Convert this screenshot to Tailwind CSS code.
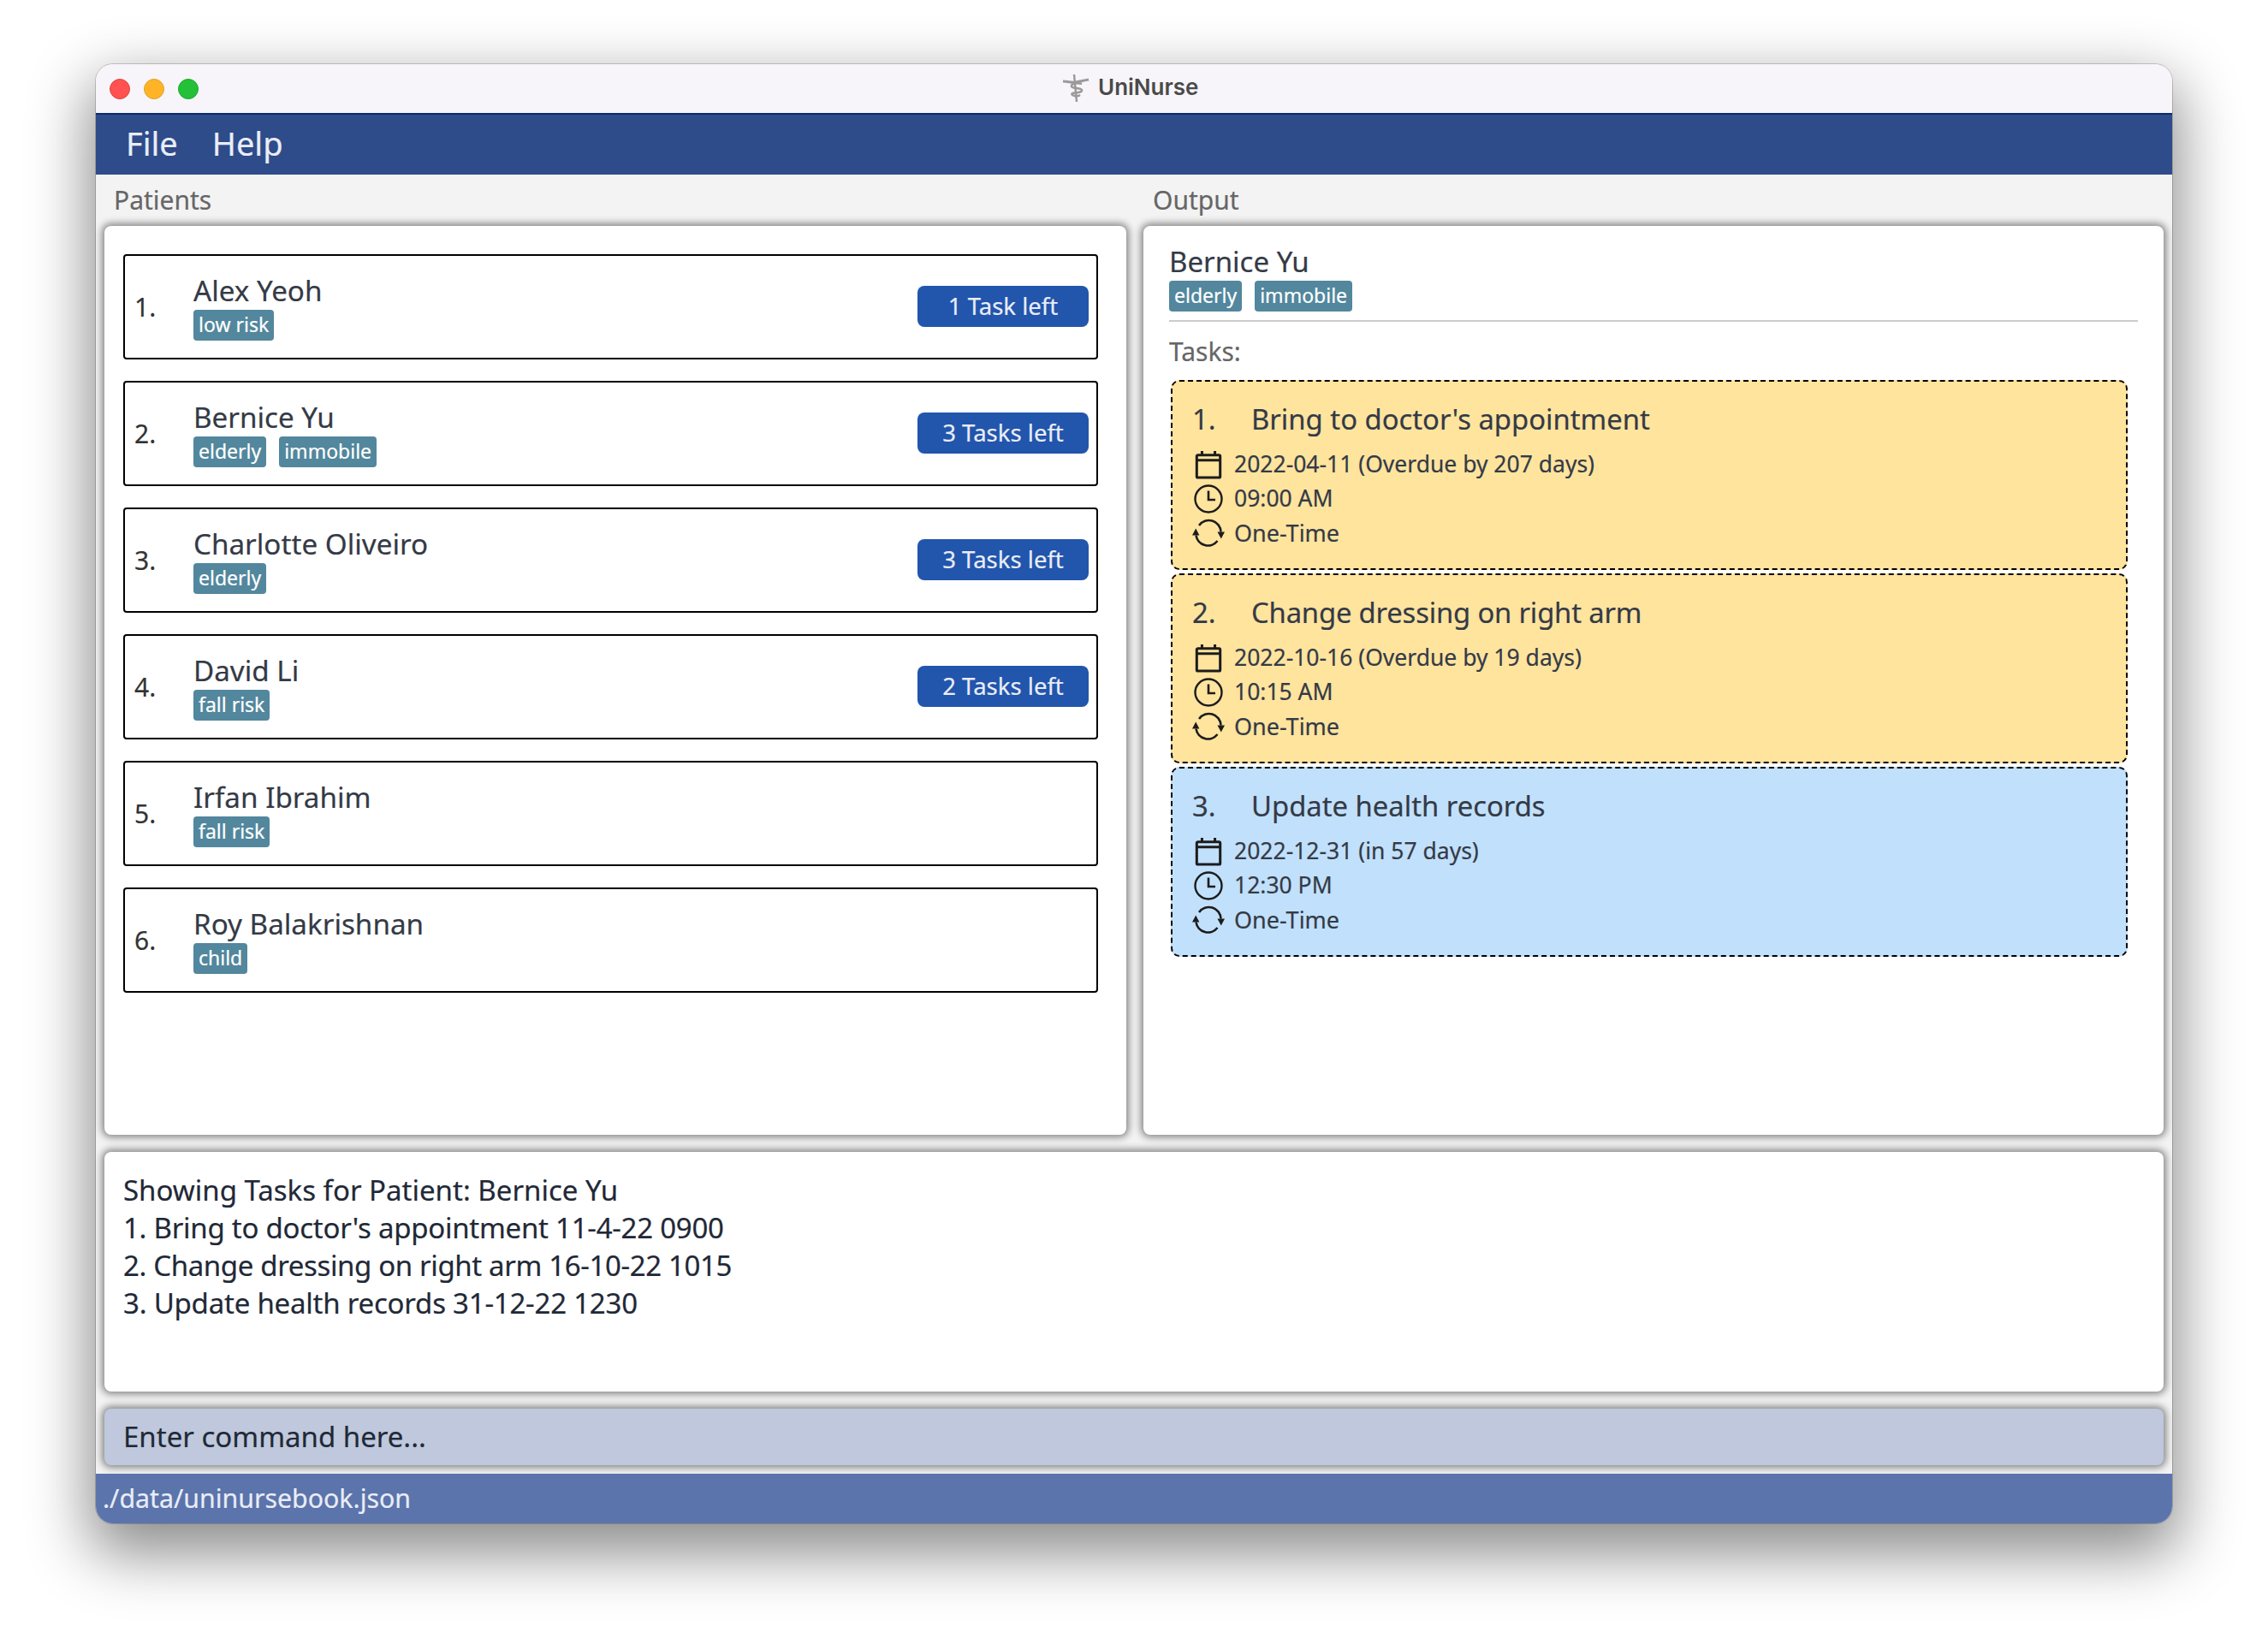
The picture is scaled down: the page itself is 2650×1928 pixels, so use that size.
<!DOCTYPE html>
<html lang="en">
<head>
    <meta charset="UTF-8">
    <meta name="viewport" content="width=device-width, initial-scale=1.0">
    <title>UniNurse</title>
    <script src="https://cdn.jsdelivr.net/npm/@tailwindcss/browser@4"></script>
</head>
<body class="bg-white h-[1928px] pt-[75px] pl-[112px] font-['Noto_Sans',sans-serif] [-webkit-text-stroke:0.2px] overflow-hidden">
    <!-- icons used by the task cards -->
    <svg class="hidden">
        <symbol id="i-cal" viewBox="0 0 32 36">
            <path d="M3 6h26a1.500 1.500 0 0 1 1.500 1.500v25a1.500 1.500 0 0 1-1.500 1.500h-26a1.500 1.500 0 0 1-1.500-1.500v-25a1.500 1.500 0 0 1 1.500-1.500z M1.500 12.500h29 M8 1v5 M24 1v5" fill="none" stroke="#1c1c1c" stroke-width="3.200"/>
        </symbol>
        <symbol id="i-clock" viewBox="0 0 34 34">
            <circle cx="17" cy="17" r="15.500" fill="none" stroke="#1c1c1c" stroke-width="2.400"/>
            <path d="M17 7.500v10.500h8" fill="none" stroke="#1c1c1c" stroke-width="2.600"/>
        </symbol>
        <symbol id="i-sync" viewBox="0 -1.500 38 34">
            <path d="M8 6.500A14 14 0 0 1 33.500 14" fill="none" stroke="#1c1c1c" stroke-width="2.600"/>
            <path d="M4.500 18A14 14 0 0 0 29.500 24.500" fill="none" stroke="#1c1c1c" stroke-width="2.600"/>
            <path d="M0 18l4.200-8 4.200 8z M29.500 14h8.500l-4.200 8z" fill="#1c1c1c"/>
        </symbol>
    </svg>

    <div class="w-[2426px] h-[1705px] flex flex-col rounded-[20px] overflow-hidden bg-[#f3f3f3] shadow-[0_0_0_1px_rgba(0,0,0,0.18),0_28px_70px_8px_rgba(0,0,0,0.45)]">
        <!-- title bar -->
        <div class="h-[57px] shrink-0 bg-[#f7f5f9] relative flex items-center pl-[16px] gap-[16px]">
            <span class="w-[24px] h-[24px] rounded-full bg-[#ff5251] border border-[#e0443e]"></span>
            <span class="w-[24px] h-[24px] rounded-full bg-[#ffb428] border border-[#dea123]"></span>
            <span class="w-[24px] h-[24px] rounded-full bg-[#24c138] border border-[#1aab29]"></span>
            <div class="absolute left-[1129px] top-[10px] flex items-center gap-[10px]">
                <svg width="32" height="34" viewBox="0 0 32 34" fill="none" stroke="#9a9a9a">
                    <path d="M14 1l3 32" stroke-width="2.500"/>
                    <path d="M1 9c7 0 9 2 15 1 6-1 9-2 15-3" stroke-width="3"/>
                    <path d="M23 12c-6-2-13 0-12 3 1 3 13 1 12 5-1 3-9 2-11 3-3 2 5 5 9 2" stroke-width="2.500"/>
                </svg>
                <span class="font-['Inter',sans-serif] font-semibold text-[26px] mt-[-3px] text-[#4a4a4a] [-webkit-text-stroke:0]">UniNurse</span>
            </div>
        </div>

        <!-- menu bar -->
        <div class="h-[72px] shrink-0 bg-[#2e4b8a] border-t-2 border-[#0c2a6e] flex items-center pl-[35px] pb-[3px] gap-[40px] text-[38px] text-[#e9edf6]">
            <span>File</span>
            <span>Help</span>
        </div>

        <!-- main -->
        <div class="flex-1 flex flex-col pl-[10px] pr-[10px] min-h-0">
            <div class="grid grid-cols-[1194px_1192px] gap-[20px] h-[1122px] shrink-0">
                <div class="flex flex-col min-h-0">
                    <div class="h-[60px] shrink-0 pl-[11px] pt-[10px] text-[30px] leading-[40px] text-[#666]">Patients</div>
                    <div class="flex-1 bg-white rounded-[8px] shadow-[0_0_9px_3px_rgba(0,0,0,0.45)] pt-[33px] pl-[22px] pr-[33px] flex flex-col gap-[25px]">
                        <div class="h-[123px] border-2 border-black rounded-[4px] flex items-center pl-[11px] pr-[9px]">
                            <span class="w-[69px] text-[30px] text-[#333]">1.</span>
                            <div class="flex-1">
                                <div class="text-[33.200px] leading-[40px] text-[#343a46]">Alex Yeoh</div>
                                <div class="flex gap-[15px] mt-[2px]">
                                    <span class="h-[36px] px-[6px] rounded-[4px] bg-[#52879d] text-white text-[23px] leading-[34px]">low risk</span>
                                </div>
                            </div>
                            <span class="w-[200px] h-[48px] mt-[-2px] rounded-[8px] bg-[#2255ac] text-[#e9edf6] text-[27.5px] leading-[48px] text-center">1 Task left</span>
                        </div>
                        <div class="h-[123px] border-2 border-black rounded-[4px] flex items-center pl-[11px] pr-[9px]">
                            <span class="w-[69px] text-[30px] text-[#333]">2.</span>
                            <div class="flex-1">
                                <div class="text-[33.200px] leading-[40px] text-[#343a46]">Bernice Yu</div>
                                <div class="flex gap-[15px] mt-[2px]">
                                    <span class="h-[36px] px-[6px] rounded-[4px] bg-[#52879d] text-white text-[23px] leading-[34px]">elderly</span>
                                    <span class="h-[36px] px-[6px] rounded-[4px] bg-[#52879d] text-white text-[23px] leading-[34px]">immobile</span>
                                </div>
                            </div>
                            <span class="w-[200px] h-[48px] mt-[-2px] rounded-[8px] bg-[#2255ac] text-[#e9edf6] text-[27.5px] leading-[48px] text-center">3 Tasks left</span>
                        </div>
                        <div class="h-[123px] border-2 border-black rounded-[4px] flex items-center pl-[11px] pr-[9px]">
                            <span class="w-[69px] text-[30px] text-[#333]">3.</span>
                            <div class="flex-1">
                                <div class="text-[33.200px] leading-[40px] text-[#343a46]">Charlotte Oliveiro</div>
                                <div class="flex gap-[15px] mt-[2px]">
                                    <span class="h-[36px] px-[6px] rounded-[4px] bg-[#52879d] text-white text-[23px] leading-[34px]">elderly</span>
                                </div>
                            </div>
                            <span class="w-[200px] h-[48px] mt-[-2px] rounded-[8px] bg-[#2255ac] text-[#e9edf6] text-[27.5px] leading-[48px] text-center">3 Tasks left</span>
                        </div>
                        <div class="h-[123px] border-2 border-black rounded-[4px] flex items-center pl-[11px] pr-[9px]">
                            <span class="w-[69px] text-[30px] text-[#333]">4.</span>
                            <div class="flex-1">
                                <div class="text-[33.200px] leading-[40px] text-[#343a46]">David Li</div>
                                <div class="flex gap-[15px] mt-[2px]">
                                    <span class="h-[36px] px-[6px] rounded-[4px] bg-[#52879d] text-white text-[23px] leading-[34px]">fall risk</span>
                                </div>
                            </div>
                            <span class="w-[200px] h-[48px] mt-[-2px] rounded-[8px] bg-[#2255ac] text-[#e9edf6] text-[27.5px] leading-[48px] text-center">2 Tasks left</span>
                        </div>
                        <div class="h-[123px] border-2 border-black rounded-[4px] flex items-center pl-[11px] pr-[9px]">
                            <span class="w-[69px] text-[30px] text-[#333]">5.</span>
                            <div class="flex-1">
                                <div class="text-[33.200px] leading-[40px] text-[#343a46]">Irfan Ibrahim</div>
                                <div class="flex gap-[15px] mt-[2px]">
                                    <span class="h-[36px] px-[6px] rounded-[4px] bg-[#52879d] text-white text-[23px] leading-[34px]">fall risk</span>
                                </div>
                            </div>
                        </div>
                        <div class="h-[123px] border-2 border-black rounded-[4px] flex items-center pl-[11px] pr-[9px]">
                            <span class="w-[69px] text-[30px] text-[#333]">6.</span>
                            <div class="flex-1">
                                <div class="text-[33.200px] leading-[40px] text-[#343a46]">Roy Balakrishnan</div>
                                <div class="flex gap-[15px] mt-[2px]">
                                    <span class="h-[36px] px-[6px] rounded-[4px] bg-[#52879d] text-white text-[23px] leading-[34px]">child</span>
                                </div>
                            </div>
                        </div>
                    </div>
                </div>

                <div class="flex flex-col min-h-0">
                    <div class="h-[60px] shrink-0 pl-[11px] pt-[10px] text-[30px] leading-[40px] text-[#666]">Output</div>
                    <div class="flex-1 bg-white rounded-[8px] shadow-[0_0_9px_3px_rgba(0,0,0,0.45)] pt-[22px] pl-[30px] pr-[30px] flex flex-col">
                        <div class="text-[33px] leading-[40px] mb-[2px] text-[#343a46]">Bernice Yu</div>
                        <div class="flex gap-[15px] border-b-2 border-[#ccc] pb-[10px]">
                            <span class="h-[36px] px-[6px] rounded-[4px] bg-[#52879d] text-white text-[23px] leading-[34px]">elderly</span>
                            <span class="h-[36px] px-[6px] rounded-[4px] bg-[#52879d] text-white text-[23px] leading-[34px]">immobile</span>
                        </div>
                        <div class="text-[30px] leading-[40px] text-[#666] mt-[15px]">Tasks:</div>
                        <div class="flex flex-col gap-[4px] mt-[13px] pl-[2px] pr-[12px]">
                            <div class="h-[222px] bg-[#ffe49e] border-2 border-dashed border-black rounded-[10px] pl-[23px] pt-[22px]">
                                <div class="flex text-[32.800px] leading-[44px] text-[#343a46]"><span class="w-[69px]">1.</span><span>Bring to doctor's appointment</span></div>
                                <div class="flex items-center h-[40px] mt-[11px] text-[26.500px] text-[#343a46]"><svg class="w-[38px] h-[34px] mr-[11px]"><use href="#i-cal"/></svg>2022-04-11 (Overdue by 207 days)</div>
                                <div class="flex items-center h-[40px] text-[26.500px] text-[#343a46]"><svg class="w-[38px] h-[34px] mr-[11px]"><use href="#i-clock"/></svg>09:00 AM</div>
                                <div class="flex items-center h-[40px] text-[27px] text-[#343a46]"><svg class="w-[38px] h-[34px] mr-[11px]"><use href="#i-sync"/></svg>One-Time</div>
                            </div>
                            <div class="h-[222px] bg-[#ffe49e] border-2 border-dashed border-black rounded-[10px] pl-[23px] pt-[22px]">
                                <div class="flex text-[32.800px] leading-[44px] text-[#343a46]"><span class="w-[69px]">2.</span><span class="tracking-[-0.18px]">Change dressing on right arm</span></div>
                                <div class="flex items-center h-[40px] mt-[11px] text-[26.500px] text-[#343a46]"><svg class="w-[38px] h-[34px] mr-[11px]"><use href="#i-cal"/></svg>2022-10-16 (Overdue by 19 days)</div>
                                <div class="flex items-center h-[40px] text-[26.500px] text-[#343a46]"><svg class="w-[38px] h-[34px] mr-[11px]"><use href="#i-clock"/></svg>10:15 AM</div>
                                <div class="flex items-center h-[40px] text-[27px] text-[#343a46]"><svg class="w-[38px] h-[34px] mr-[11px]"><use href="#i-sync"/></svg>One-Time</div>
                            </div>
                            <div class="h-[222px] bg-[#c1e0fb] border-2 border-dashed border-black rounded-[10px] pl-[23px] pt-[22px]">
                                <div class="flex text-[32.800px] leading-[44px] text-[#343a46]"><span class="w-[69px]">3.</span><span>Update health records</span></div>
                                <div class="flex items-center h-[40px] mt-[11px] text-[26.500px] text-[#343a46]"><svg class="w-[38px] h-[34px] mr-[11px]"><use href="#i-cal"/></svg>2022-12-31 (in 57 days)</div>
                                <div class="flex items-center h-[40px] text-[26.500px] text-[#343a46]"><svg class="w-[38px] h-[34px] mr-[11px]"><use href="#i-clock"/></svg>12:30 PM</div>
                                <div class="flex items-center h-[40px] text-[27px] text-[#343a46]"><svg class="w-[38px] h-[34px] mr-[11px]"><use href="#i-sync"/></svg>One-Time</div>
                            </div>
                        </div>
                    </div>
                </div>
            </div>

            <!-- result box -->
            <div class="h-[280px] shrink-0 mt-[20px] bg-white rounded-[8px] shadow-[0_0_9px_3px_rgba(0,0,0,0.45)] pt-[23px] pl-[22px] text-[33px] leading-[44px] text-[#1f2937]">
                <div>Showing Tasks for Patient: Bernice Yu</div>
                <div class="tracking-[-0.26px]">1. Bring to doctor's appointment 11-4-22 0900</div>
                <div class="tracking-[-0.37px]">2. Change dressing on right arm 16-10-22 1015</div>
                <div class="tracking-[-0.22px]">3. Update health records 31-12-22 1230</div>
            </div>

            <!-- command box -->
            <div class="h-[66px] shrink-0 mt-[20px] bg-[#bfc8dc] rounded-[8px] shadow-[0_0_9px_3px_rgba(0,0,0,0.45)] pl-[22px] text-[33px] leading-[66px] text-[#1f2937]">Enter command here...</div>
        </div>

        <!-- status bar -->
        <div class="h-[58px] shrink-0 bg-[#5b74ac] pl-[8px] text-[30.300px] leading-[58px] text-[#e9edf6]">./data/uninursebook.json</div>
    </div>
</body>
</html>
